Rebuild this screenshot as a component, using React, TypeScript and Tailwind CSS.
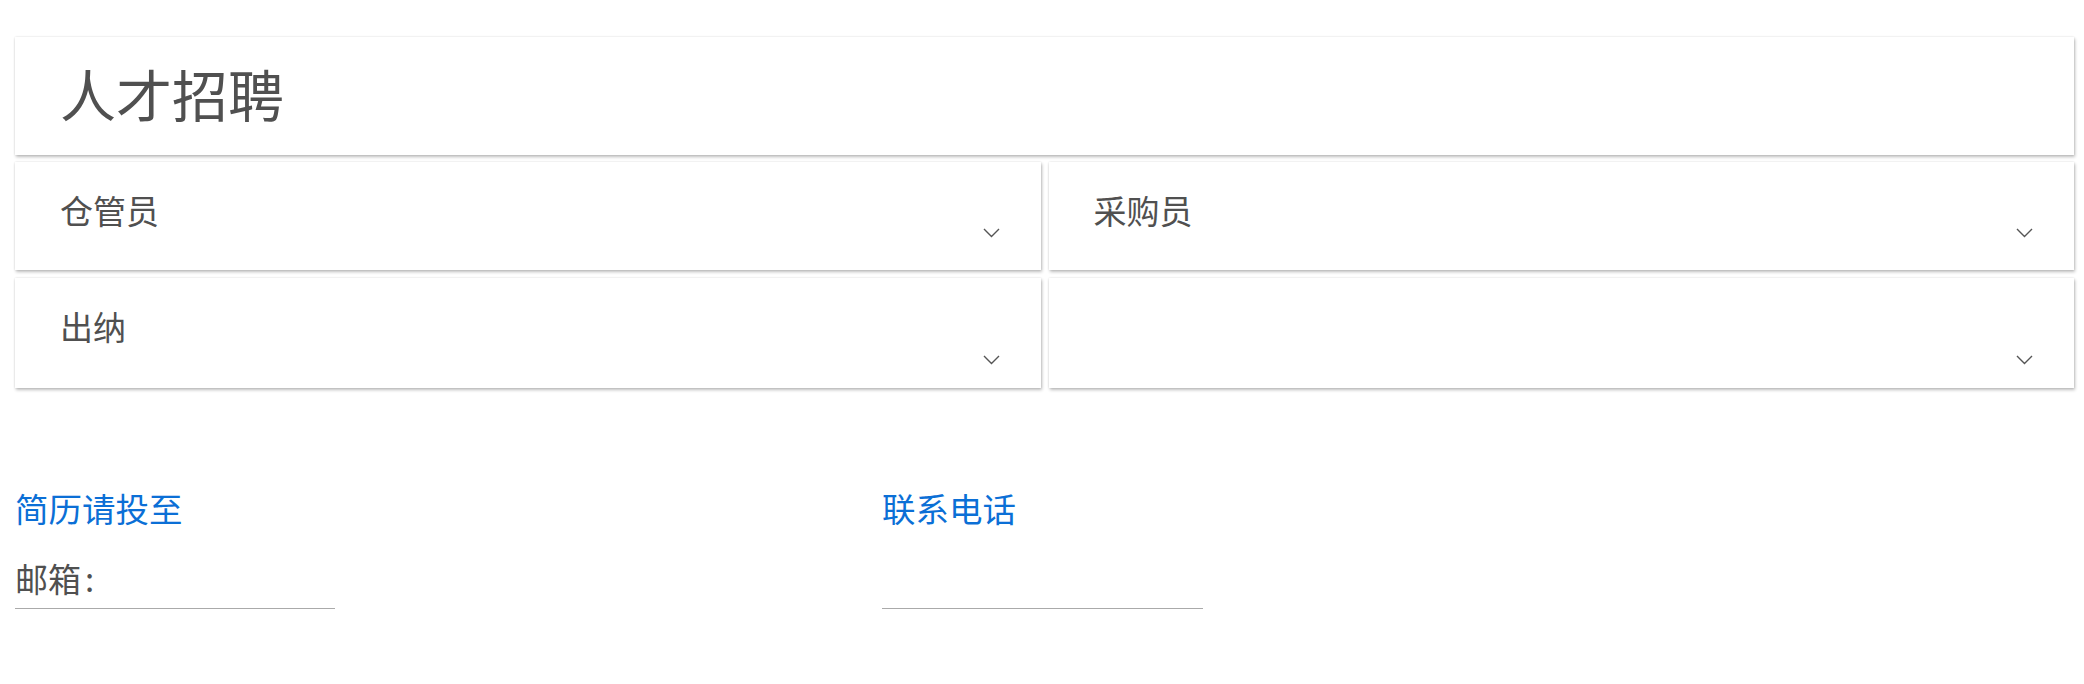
import React from "react";

const font = { fontFamily: '"Noto Sans CJK SC", "Noto Sans", sans-serif' };

function Chevron() {
  return (
    <svg width="17" height="10" viewBox="0 0 17 10" fill="none">
      <path d="M1 1 L8.5 8.5 L16 1" stroke="#555" strokeWidth="1.4" />
    </svg>
  );
}

function Card({ label, h, mb }: { label?: string; h: string; mb: string }) {
  return (
    <div
      className={`${h} flex justify-between bg-white pl-[45px] pr-[41px] pt-[32px] shadow-[1px_2px_3px_rgba(0,0,0,0.25),0_0_2px_rgba(0,0,0,0.12)]`}
    >
      <div className="text-[33px] font-normal leading-none text-[#505050]">{label}</div>
      <div className={`self-end ${mb} flex`}>
        <Chevron />
      </div>
    </div>
  );
}

export default function App() {
  return (
    <div className="min-h-[684px] bg-white" style={font}>
      <div className="ml-[15px] w-[2059px] pt-[37px]">
        <div className="flex h-[118px] items-center bg-white pb-[6px] pl-[45px] shadow-[1px_2px_3px_rgba(0,0,0,0.25),0_0_2px_rgba(0,0,0,0.12)]">
          <h1 className="text-[56px] font-normal leading-none text-[#505050]">人才招聘</h1>
        </div>
        <div className="mt-[7px] grid grid-cols-2 gap-x-[8px] gap-y-[8px]">
          <Card label="仓管员" h="h-[108px]" mb="mb-[32px]" />
          <Card label="采购员" h="h-[108px]" mb="mb-[32px]" />
          <Card label="出纳" h="h-[110px]" mb="mb-[23px]" />
          <Card h="h-[110px]" mb="mb-[23px]" />
        </div>
        <div className="mt-[103px] flex">
          <div className="w-[867px]">
            <div className="text-[33.5px] font-normal leading-none text-[#0b6fd6]">简历请投至</div>
            <div className="flex h-[84px] w-[320px] items-end border-b border-[#aaaaaa] pb-[13px]">
              <span className="text-[33px] font-normal leading-none text-[#505050]">
                邮箱<span className="ml-[4px]">:</span>
              </span>
            </div>
          </div>
          <div>
            <div className="text-[33.5px] font-normal leading-none text-[#0b6fd6]">联系电话</div>
            <div className="flex h-[84px] w-[321px] items-end border-b border-[#aaaaaa] pb-[13px]" />
          </div>
        </div>
      </div>
    </div>
  );
}
